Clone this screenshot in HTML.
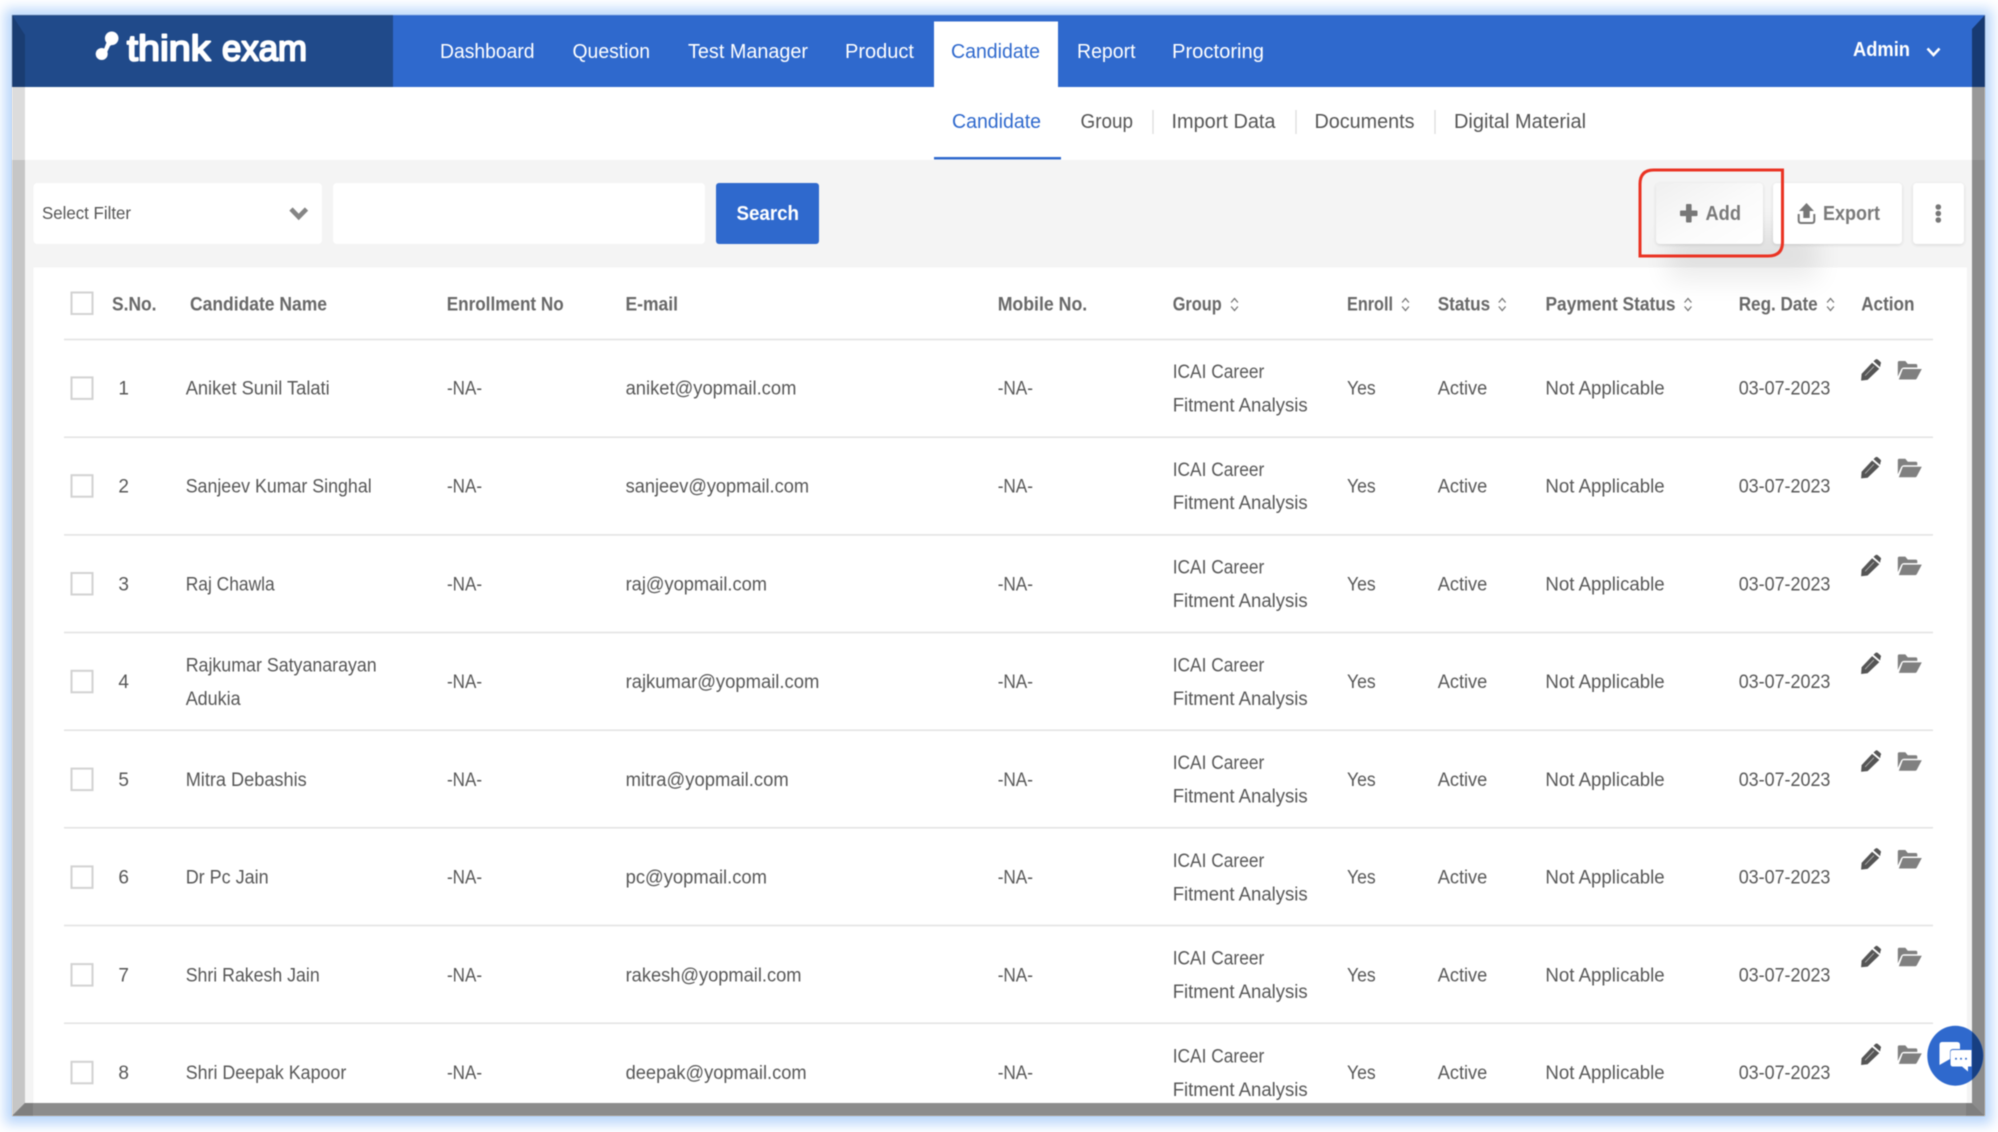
<!DOCTYPE html>
<html lang="en">
<head>
<meta charset="utf-8">
<title>think exam - Candidate</title>
<style>
html,body{margin:0;padding:0;background:#fff;width:1998px;height:1132px;overflow:hidden}
#glow{position:absolute;left:12px;top:15px;width:1973px;height:1101px;box-shadow:0 1px 12px 7px #b9d6fb}
svg{position:absolute;left:0;top:0;filter:blur(.45px)}
text{font-family:"Liberation Sans",sans-serif;font-size:19px;fill:#575757}
.r text{transform:translateY(-.7px)}
.n text{font-size:20px;fill:#fff}
.h text{font-weight:bold;fill:#686868;transform:translateY(-.7px)}
.s text{font-size:20px;fill:#555}
.l{stroke:#e2e2e2;stroke-width:1.5}
.c{fill:#fff;stroke:#d2d2d2;stroke-width:2;transform:translate(-.5px,-.5px)}
.k{font-size:36px;fill:#fff;stroke:#fff;stroke-width:2px;stroke-linejoin:round}
</style>
</head>
<body>
<div id="glow"></div>
<svg width="1998" height="1132" viewBox="0 0 1998 1132" xmlns="http://www.w3.org/2000/svg">
<defs>
<filter id="b" x="-40%" y="-60%" width="180%" height="220%"><feGaussianBlur stdDeviation="13"/></filter>
<filter id="d" x="-10%" y="-10%" width="120%" height="130%"><feDropShadow dx="0" dy="1" stdDeviation="1.5" flood-color="#000" flood-opacity=".12"/></filter>
<linearGradient id="ag" x1="0" y1="0" x2="1" y2="1"><stop offset="0" stop-color="#f0f0f0"/><stop offset=".55" stop-color="#fbfbfb"/><stop offset="1" stop-color="#fff"/></linearGradient>
<g id="act">
<path d="M.8 21.7 L1.3 15 L11.8 3.8 L19 9.8 L7.3 21 Z" fill="#555"/>
<path d="M13.2 2.4 L15.2 .6 Q16.3 -.2 17.4 .6 L20.4 3.2 Q21.2 4.2 20.3 5.2 L19.8 8.2 Z" fill="#555"/>
<path d="M4.8 16.8 L13.6 7.6" stroke="#aaa" stroke-width="1" fill="none"/>
<g transform="translate(37,1.6)">
<path d="M.5 16 V2 Q.5 .5 2 .5 H8 L10.5 3.5 H18.5 Q20 3.5 20 5 V7 H6.5 Q5 7 4 8.5 Z" fill="#808080"/>
<path d="M5.5 8.5 H24.5 L19.5 18 Q19 19 18 19 H1.5 Z" fill="#808080"/>
</g>
</g>
<g id="srt" fill="none" stroke="#777" stroke-width="1.3"><path d="M-3.4 -2 L0 -6 L3.4 -2"/><path d="M-3.4 2 L0 6 L3.4 2"/></g>
</defs>

<!-- page -->
<rect x="12" y="15" width="1973" height="1101" fill="#fff"/>
<rect x="25" y="160" width="1947" height="943" fill="#f4f4f4"/>

<!-- nav -->
<rect x="12" y="15" width="1973" height="72" fill="#2f69cd"/>
<rect x="12" y="15" width="381" height="72" fill="#204a8a"/>
<rect x="934" y="21.5" width="124" height="65.5" fill="#fff"/>

<!-- logo -->
<g fill="#fff"><circle cx="111.7" cy="38.3" r="6.8"/><circle cx="101.7" cy="54" r="6"/><path d="M107.5 40 L104 49 Q103 51 101 51 L105.5 55.5 L110 46 L114.5 43 Z"/></g>
<text class="k" x="127" y="60.5" textLength="83.5" lengthAdjust="spacingAndGlyphs">think</text>
<text class="k" x="222" y="60.5" textLength="85" lengthAdjust="spacingAndGlyphs">exam</text>

<g class="n">
<text x="440" y="58" textLength="94.5" lengthAdjust="spacingAndGlyphs">Dashboard</text>
<text x="572.5" y="58" textLength="77.5" lengthAdjust="spacingAndGlyphs">Question</text>
<text x="688" y="58" textLength="120" lengthAdjust="spacingAndGlyphs">Test Manager</text>
<text x="845" y="58" textLength="69" lengthAdjust="spacingAndGlyphs">Product</text>
<text x="951" y="58" textLength="89" lengthAdjust="spacingAndGlyphs" style="fill:#2f69cd">Candidate</text>
<text x="1077" y="58" textLength="58.5" lengthAdjust="spacingAndGlyphs">Report</text>
<text x="1172" y="58" textLength="92" lengthAdjust="spacingAndGlyphs">Proctoring</text>
<text x="1853" y="56" textLength="57" lengthAdjust="spacingAndGlyphs" style="font-weight:bold">Admin</text>
</g>
<path d="M1927.5 48.5 L1933.5 55 L1939.5 48.5" fill="none" stroke="#fff" stroke-width="2.6"/>

<!-- sub nav -->
<g class="s">
<text x="952" y="128" textLength="89" lengthAdjust="spacingAndGlyphs" style="fill:#2f69cd">Candidate</text>
<text x="1080.5" y="128" textLength="52.5" lengthAdjust="spacingAndGlyphs">Group</text>
<text x="1171.5" y="128" textLength="104" lengthAdjust="spacingAndGlyphs">Import Data</text>
<text x="1314.5" y="128" textLength="100" lengthAdjust="spacingAndGlyphs">Documents</text>
<text x="1454" y="128" textLength="132" lengthAdjust="spacingAndGlyphs">Digital Material</text>
</g>
<rect x="934" y="157" width="127" height="2.5" fill="#2f69cd"/>
<g stroke="#dcdcdc" stroke-width="1.3"><path d="M1153 110 V134"/><path d="M1296 110 V134"/><path d="M1435 110 V134"/></g>

<!-- table card -->
<rect x="33.5" y="267.5" width="1933.5" height="836" fill="#fff"/>

<!-- filter bar -->
<rect x="33.5" y="183" width="288.5" height="61" rx="4" fill="#fff"/>
<text x="42" y="219" textLength="89" lengthAdjust="spacingAndGlyphs" style="font-size:17.5px;fill:#555">Select Filter</text>
<path d="M291 209 L298.7 217 L306.5 209" fill="none" stroke="#858585" stroke-width="4.6"/>
<rect x="333" y="183" width="372" height="61" rx="4" fill="#fff"/>
<rect x="716" y="183" width="103" height="61" rx="3" fill="#2f69cd"/>
<text x="736.5" y="220" textLength="62.5" lengthAdjust="spacingAndGlyphs" style="font-size:20px;font-weight:bold;fill:#fff">Search</text>

<!-- soft shadow under buttons -->
<rect x="1668" y="228" width="150" height="52" fill="#000" opacity=".075" filter="url(#b)"/>

<!-- buttons -->
<rect x="1656" y="183" width="107" height="61" rx="4" fill="url(#ag)" filter="url(#d)"/>
<rect x="1680" y="210.5" width="17.5" height="5.6" rx="1" fill="#777"/><rect x="1686" y="204" width="5.6" height="18.5" rx="1" fill="#777"/>
<text x="1705.5" y="220" textLength="35.5" lengthAdjust="spacingAndGlyphs" style="font-size:20px;font-weight:bold;fill:#7a7a7a">Add</text>
<rect x="1773" y="183" width="129" height="61" rx="4" fill="#fff" filter="url(#d)"/>
<path d="M1806.5 203 L1814 211 H1809.7 V218 H1803.3 V211 H1799 Z" fill="#777"/>
<path d="M1798.7 214 V220.5 Q1798.7 223 1801 223 H1812 Q1814.3 223 1814.3 220.5 V214" fill="none" stroke="#777" stroke-width="2"/>
<text x="1823" y="220" textLength="57" lengthAdjust="spacingAndGlyphs" style="font-size:20px;font-weight:bold;fill:#7a7a7a">Export</text>
<rect x="1913" y="183" width="51" height="61" rx="4" fill="#fff" filter="url(#d)"/>
<g fill="#777"><circle cx="1938.3" cy="207" r="2.8"/><circle cx="1938.3" cy="213.5" r="2.8"/><circle cx="1938.3" cy="220" r="2.8"/></g>

<!-- red highlight -->
<path d="M1640 256 V184 Q1640 170 1654 170 H1782.5 V242 Q1782.5 256 1768 256 Z" fill="none" stroke="#ea3323" stroke-width="3"/>

<!-- table header -->
<rect class="c" x="72" y="293" width="21" height="21.5"/>
<g class="h">
<text x="112" y="311" textLength="44.5" lengthAdjust="spacingAndGlyphs">S.No.</text>
<text x="190" y="311" textLength="137" lengthAdjust="spacingAndGlyphs">Candidate Name</text>
<text x="446.7" y="311" textLength="117" lengthAdjust="spacingAndGlyphs">Enrollment No</text>
<text x="625.5" y="311" textLength="52.5" lengthAdjust="spacingAndGlyphs">E-mail</text>
<text x="997.7" y="311" textLength="89.5" lengthAdjust="spacingAndGlyphs">Mobile No.</text>
<text x="1172.7" y="311" textLength="49" lengthAdjust="spacingAndGlyphs">Group</text>
<text x="1347" y="311" textLength="46" lengthAdjust="spacingAndGlyphs">Enroll</text>
<text x="1437.7" y="311" textLength="52.5" lengthAdjust="spacingAndGlyphs">Status</text>
<text x="1545.5" y="311" textLength="130" lengthAdjust="spacingAndGlyphs">Payment Status</text>
<text x="1738.7" y="311" textLength="79" lengthAdjust="spacingAndGlyphs">Reg. Date</text>
<text x="1861.2" y="311" textLength="53.3" lengthAdjust="spacingAndGlyphs">Action</text>
</g>
<use href="#srt" x="1234.5" y="304.5"/><use href="#srt" x="1405.5" y="304.5"/><use href="#srt" x="1502.2" y="304.5"/><use href="#srt" x="1688" y="304.5"/><use href="#srt" x="1830.5" y="304.5"/>

<!-- row lines -->
<g class="l"><path d="M64 339.5 H1933"/><path d="M64 437.2 H1933"/><path d="M64 534.9 H1933"/><path d="M64 632.5 H1933"/><path d="M64 730.2 H1933"/><path d="M64 827.8 H1933"/><path d="M64 925.5 H1933"/><path d="M64 1023.2 H1933"/></g>

<!-- rows -->
<g class="r" transform="translate(0,388.9)">
<rect class="c" x="72" y="-11" width="21" height="21.5"/><text x="118.4" y="6.5">1</text>
<text x="185.7" y="6.5" textLength="144" lengthAdjust="spacingAndGlyphs">Aniket Sunil Talati</text>
<text x="447" y="6.5" textLength="35" lengthAdjust="spacingAndGlyphs">-NA-</text>
<text x="625.6" y="6.5" textLength="170.8" lengthAdjust="spacingAndGlyphs">aniket@yopmail.com</text>
<text x="997.7" y="6.5" textLength="35.3" lengthAdjust="spacingAndGlyphs">-NA-</text>
<text x="1172.7" y="-10.2" textLength="91.6" lengthAdjust="spacingAndGlyphs">ICAI Career</text>
<text x="1172.7" y="23.2" textLength="135" lengthAdjust="spacingAndGlyphs">Fitment Analysis</text>
<text x="1347" y="6.5" textLength="28.7" lengthAdjust="spacingAndGlyphs">Yes</text>
<text x="1437.7" y="6.5" textLength="49.6" lengthAdjust="spacingAndGlyphs">Active</text>
<text x="1545.4" y="6.5" textLength="119.3" lengthAdjust="spacingAndGlyphs">Not Applicable</text>
<text x="1738.7" y="6.5" textLength="91.7" lengthAdjust="spacingAndGlyphs">03-07-2023</text>
<use href="#act" x="1860.3" y="-30"/>
</g>
<g class="r" transform="translate(0,486.7)">
<rect class="c" x="72" y="-11" width="21" height="21.5"/><text x="118.4" y="6.5">2</text>
<text x="185.7" y="6.5" textLength="186" lengthAdjust="spacingAndGlyphs">Sanjeev Kumar Singhal</text>
<text x="447" y="6.5" textLength="35" lengthAdjust="spacingAndGlyphs">-NA-</text>
<text x="625.6" y="6.5" textLength="183.4" lengthAdjust="spacingAndGlyphs">sanjeev@yopmail.com</text>
<text x="997.7" y="6.5" textLength="35.3" lengthAdjust="spacingAndGlyphs">-NA-</text>
<text x="1172.7" y="-10.2" textLength="91.6" lengthAdjust="spacingAndGlyphs">ICAI Career</text>
<text x="1172.7" y="23.2" textLength="135" lengthAdjust="spacingAndGlyphs">Fitment Analysis</text>
<text x="1347" y="6.5" textLength="28.7" lengthAdjust="spacingAndGlyphs">Yes</text>
<text x="1437.7" y="6.5" textLength="49.6" lengthAdjust="spacingAndGlyphs">Active</text>
<text x="1545.4" y="6.5" textLength="119.3" lengthAdjust="spacingAndGlyphs">Not Applicable</text>
<text x="1738.7" y="6.5" textLength="91.7" lengthAdjust="spacingAndGlyphs">03-07-2023</text>
<use href="#act" x="1860.3" y="-30"/>
</g>
<g class="r" transform="translate(0,584.5)">
<rect class="c" x="72" y="-11" width="21" height="21.5"/><text x="118.4" y="6.5">3</text>
<text x="185.7" y="6.5" textLength="89" lengthAdjust="spacingAndGlyphs">Raj Chawla</text>
<text x="447" y="6.5" textLength="35" lengthAdjust="spacingAndGlyphs">-NA-</text>
<text x="625.6" y="6.5" textLength="141.4" lengthAdjust="spacingAndGlyphs">raj@yopmail.com</text>
<text x="997.7" y="6.5" textLength="35.3" lengthAdjust="spacingAndGlyphs">-NA-</text>
<text x="1172.7" y="-10.2" textLength="91.6" lengthAdjust="spacingAndGlyphs">ICAI Career</text>
<text x="1172.7" y="23.2" textLength="135" lengthAdjust="spacingAndGlyphs">Fitment Analysis</text>
<text x="1347" y="6.5" textLength="28.7" lengthAdjust="spacingAndGlyphs">Yes</text>
<text x="1437.7" y="6.5" textLength="49.6" lengthAdjust="spacingAndGlyphs">Active</text>
<text x="1545.4" y="6.5" textLength="119.3" lengthAdjust="spacingAndGlyphs">Not Applicable</text>
<text x="1738.7" y="6.5" textLength="91.7" lengthAdjust="spacingAndGlyphs">03-07-2023</text>
<use href="#act" x="1860.3" y="-30"/>
</g>
<g class="r" transform="translate(0,682.3)">
<rect class="c" x="72" y="-11" width="21" height="21.5"/><text x="118.4" y="6.5">4</text>
<text x="185.7" y="-10.2" textLength="191" lengthAdjust="spacingAndGlyphs">Rajkumar Satyanarayan</text>
<text x="185.7" y="23.2" textLength="55" lengthAdjust="spacingAndGlyphs">Adukia</text>
<text x="447" y="6.5" textLength="35" lengthAdjust="spacingAndGlyphs">-NA-</text>
<text x="625.6" y="6.5" textLength="193.7" lengthAdjust="spacingAndGlyphs">rajkumar@yopmail.com</text>
<text x="997.7" y="6.5" textLength="35.3" lengthAdjust="spacingAndGlyphs">-NA-</text>
<text x="1172.7" y="-10.2" textLength="91.6" lengthAdjust="spacingAndGlyphs">ICAI Career</text>
<text x="1172.7" y="23.2" textLength="135" lengthAdjust="spacingAndGlyphs">Fitment Analysis</text>
<text x="1347" y="6.5" textLength="28.7" lengthAdjust="spacingAndGlyphs">Yes</text>
<text x="1437.7" y="6.5" textLength="49.6" lengthAdjust="spacingAndGlyphs">Active</text>
<text x="1545.4" y="6.5" textLength="119.3" lengthAdjust="spacingAndGlyphs">Not Applicable</text>
<text x="1738.7" y="6.5" textLength="91.7" lengthAdjust="spacingAndGlyphs">03-07-2023</text>
<use href="#act" x="1860.3" y="-30"/>
</g>
<g class="r" transform="translate(0,780.1)">
<rect class="c" x="72" y="-11" width="21" height="21.5"/><text x="118.4" y="6.5">5</text>
<text x="185.7" y="6.5" textLength="121" lengthAdjust="spacingAndGlyphs">Mitra Debashis</text>
<text x="447" y="6.5" textLength="35" lengthAdjust="spacingAndGlyphs">-NA-</text>
<text x="625.6" y="6.5" textLength="163.1" lengthAdjust="spacingAndGlyphs">mitra@yopmail.com</text>
<text x="997.7" y="6.5" textLength="35.3" lengthAdjust="spacingAndGlyphs">-NA-</text>
<text x="1172.7" y="-10.2" textLength="91.6" lengthAdjust="spacingAndGlyphs">ICAI Career</text>
<text x="1172.7" y="23.2" textLength="135" lengthAdjust="spacingAndGlyphs">Fitment Analysis</text>
<text x="1347" y="6.5" textLength="28.7" lengthAdjust="spacingAndGlyphs">Yes</text>
<text x="1437.7" y="6.5" textLength="49.6" lengthAdjust="spacingAndGlyphs">Active</text>
<text x="1545.4" y="6.5" textLength="119.3" lengthAdjust="spacingAndGlyphs">Not Applicable</text>
<text x="1738.7" y="6.5" textLength="91.7" lengthAdjust="spacingAndGlyphs">03-07-2023</text>
<use href="#act" x="1860.3" y="-30"/>
</g>
<g class="r" transform="translate(0,877.9)">
<rect class="c" x="72" y="-11" width="21" height="21.5"/><text x="118.4" y="6.5">6</text>
<text x="185.7" y="6.5" textLength="83" lengthAdjust="spacingAndGlyphs">Dr Pc Jain</text>
<text x="447" y="6.5" textLength="35" lengthAdjust="spacingAndGlyphs">-NA-</text>
<text x="625.6" y="6.5" textLength="141.4" lengthAdjust="spacingAndGlyphs">pc@yopmail.com</text>
<text x="997.7" y="6.5" textLength="35.3" lengthAdjust="spacingAndGlyphs">-NA-</text>
<text x="1172.7" y="-10.2" textLength="91.6" lengthAdjust="spacingAndGlyphs">ICAI Career</text>
<text x="1172.7" y="23.2" textLength="135" lengthAdjust="spacingAndGlyphs">Fitment Analysis</text>
<text x="1347" y="6.5" textLength="28.7" lengthAdjust="spacingAndGlyphs">Yes</text>
<text x="1437.7" y="6.5" textLength="49.6" lengthAdjust="spacingAndGlyphs">Active</text>
<text x="1545.4" y="6.5" textLength="119.3" lengthAdjust="spacingAndGlyphs">Not Applicable</text>
<text x="1738.7" y="6.5" textLength="91.7" lengthAdjust="spacingAndGlyphs">03-07-2023</text>
<use href="#act" x="1860.3" y="-30"/>
</g>
<g class="r" transform="translate(0,975.6)">
<rect class="c" x="72" y="-11" width="21" height="21.5"/><text x="118.4" y="6.5">7</text>
<text x="185.7" y="6.5" textLength="134" lengthAdjust="spacingAndGlyphs">Shri Rakesh Jain</text>
<text x="447" y="6.5" textLength="35" lengthAdjust="spacingAndGlyphs">-NA-</text>
<text x="625.6" y="6.5" textLength="175.9" lengthAdjust="spacingAndGlyphs">rakesh@yopmail.com</text>
<text x="997.7" y="6.5" textLength="35.3" lengthAdjust="spacingAndGlyphs">-NA-</text>
<text x="1172.7" y="-10.2" textLength="91.6" lengthAdjust="spacingAndGlyphs">ICAI Career</text>
<text x="1172.7" y="23.2" textLength="135" lengthAdjust="spacingAndGlyphs">Fitment Analysis</text>
<text x="1347" y="6.5" textLength="28.7" lengthAdjust="spacingAndGlyphs">Yes</text>
<text x="1437.7" y="6.5" textLength="49.6" lengthAdjust="spacingAndGlyphs">Active</text>
<text x="1545.4" y="6.5" textLength="119.3" lengthAdjust="spacingAndGlyphs">Not Applicable</text>
<text x="1738.7" y="6.5" textLength="91.7" lengthAdjust="spacingAndGlyphs">03-07-2023</text>
<use href="#act" x="1860.3" y="-30"/>
</g>
<g class="r" transform="translate(0,1073.3)">
<rect class="c" x="72" y="-11" width="21" height="21.5"/><text x="118.4" y="6.5">8</text>
<text x="185.7" y="6.5" textLength="160.6" lengthAdjust="spacingAndGlyphs">Shri Deepak Kapoor</text>
<text x="447" y="6.5" textLength="35" lengthAdjust="spacingAndGlyphs">-NA-</text>
<text x="625.6" y="6.5" textLength="181" lengthAdjust="spacingAndGlyphs">deepak@yopmail.com</text>
<text x="997.7" y="6.5" textLength="35.3" lengthAdjust="spacingAndGlyphs">-NA-</text>
<text x="1172.7" y="-10.2" textLength="91.6" lengthAdjust="spacingAndGlyphs">ICAI Career</text>
<text x="1172.7" y="23.2" textLength="135" lengthAdjust="spacingAndGlyphs">Fitment Analysis</text>
<text x="1347" y="6.5" textLength="28.7" lengthAdjust="spacingAndGlyphs">Yes</text>
<text x="1437.7" y="6.5" textLength="49.6" lengthAdjust="spacingAndGlyphs">Active</text>
<text x="1545.4" y="6.5" textLength="119.3" lengthAdjust="spacingAndGlyphs">Not Applicable</text>
<text x="1738.7" y="6.5" textLength="91.7" lengthAdjust="spacingAndGlyphs">03-07-2023</text>
<use href="#act" x="1860.3" y="-30"/>
</g>

<!-- frame bevel bands -->
<polygon points="12,15 25,35 25,87 12,87" fill="#1a3d72"/>
<rect x="12" y="87" width="13" height="73" fill="#dcdcdc"/>
<polygon points="12,160 25,160 25,1103 12,1116" fill="#c6c6c6"/>
<polygon points="1985,15 1972,29 1972,87 1985,87" fill="#173a72"/>
<rect x="1972" y="87" width="13" height="73" fill="#989898"/>
<polygon points="1972,160 1985,160 1985,1116 1972,1103" fill="#8c8c8c"/>
<polygon points="25,1103 1972,1103 1985,1116 12,1116" fill="#8c8c8c"/>
<polygon points="1966,1103 1972,1103 1985,1116 1966,1116" fill="#7f7f7f"/>
<polygon points="12,1116 25,1103 33,1103 33,1116" fill="#7f7f7f"/>

<!-- chat bubble -->
<ellipse cx="1955.3" cy="1055.7" rx="28" ry="30" fill="#2f69cd"/>
<path d="M1972 1031.8 A28 30 0 0 1 1972 1079.6 Z" fill="#173f82"/>
<path d="M1942 1042 H1957 Q1960 1042 1960 1045 V1049 H1953 Q1950 1049 1950 1052 V1059 L1939.5 1065 V1045 Q1939.5 1042 1942 1042 Z" fill="#fff"/>
<path d="M1953 1050 H1971.5 V1066.5 H1968 V1071.5 L1962 1066.5 H1953 Q1950.5 1066.5 1950.5 1064 V1052.5 Q1950.5 1050 1953 1050 Z" fill="#fff"/>
<g fill="#2f69cd"><circle cx="1956" cy="1058.8" r="1"/><circle cx="1961" cy="1058.8" r="1"/><circle cx="1966" cy="1058.8" r="1"/></g>
</svg>
</body>
</html>
